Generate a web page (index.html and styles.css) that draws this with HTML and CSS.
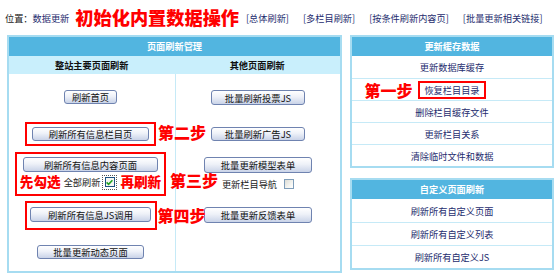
FILE: index.html
```html
<!DOCTYPE html>
<html lang="zh-CN">
<head>
  <meta charset="UTF-8">
  <title>初始化内置数据操作</title>
  <link rel="stylesheet" href="styles.css">
</head>
<body>

  <div class="topbar">
    <span class="loc">位置：<a href="#">数据更新</a></span>
    <span class="big-title">初始化内置数据操作</span>
    <a class="toplink first" href="#">[总体刷新]</a>
    <a class="toplink" href="#">[多栏目刷新]</a>
    <a class="toplink" href="#">[按条件刷新内容页]</a>
    <a class="toplink" href="#">[批量更新相关链接]</a>
  </div>

  <div class="main">
    <!-- left: page refresh -->
    <div class="panel left-panel">
      <div class="panel-head">页面刷新管理</div>
      <div class="sub-head">
        <div class="sub-cell">整站主要页面刷新</div>
        <div class="sub-cell">其他页面刷新</div>
      </div>
      <div class="cols">
        <div class="col col-a">
          <button class="btn b-home">刷新首页</button>

          <div class="mark mark1">
            <button class="btn b-list">刷新所有信息栏目页</button>
            <span class="step step2">第二步</span>
          </div>

          <div class="mark mark2">
            <button class="btn b-content">刷新所有信息内容页面</button>
            <div class="check-row">
              <span class="note">先勾选</span>
              <span class="check-label">全部刷新</span>
              <span class="focus"><span class="cbox checked"><svg width="7" height="7" viewBox="0 0 7 7"><path d="M0.6 3.4 L2.6 5.4 L6.4 1.2" stroke="#21a321" stroke-width="1.6" fill="none"/></svg></span></span>
              <span class="note">再刷新</span>
            </div>
            <span class="step step3">第三步</span>
          </div>

          <div class="mark mark3">
            <button class="btn b-js">刷新所有信息JS调用</button>
            <span class="step step4">第四步</span>
          </div>

          <button class="btn b-dyn">批量更新动态页面</button>
        </div>

        <div class="col col-b">
          <button class="btn b-vote">批量刷新投票JS</button>
          <button class="btn b-ad">批量刷新广告JS</button>
          <button class="btn b-model">批量更新模型表单</button>
          <div class="nav-row">
            <span>更新栏目导航</span>
            <span class="cbox"></span>
          </div>
          <button class="btn b-feed">批量更新反馈表单</button>
        </div>
      </div>
    </div>

    <!-- right: cache + custom pages -->
    <div class="side">
      <div class="panel box box1">
        <div class="panel-head">更新缓存数据</div>
        <div class="row"><a href="#">更新数据库缓存</a></div>
        <div class="row">
          <span class="mark-link">
            <a href="#">恢复栏目目录</a>
            <span class="step step1">第一步</span>
          </span>
        </div>
        <div class="row"><a href="#">删除栏目缓存文件</a></div>
        <div class="row"><a href="#">更新栏目关系</a></div>
        <div class="row"><a href="#">清除临时文件和数据</a></div>
      </div>

      <div class="panel box box2">
        <div class="panel-head">自定义页面刷新</div>
        <div class="row"><a href="#">刷新所有自定义页面</a></div>
        <div class="row"><a href="#">刷新所有自定义列表</a></div>
        <div class="row"><a href="#">刷新所有自定义JS</a></div>
      </div>
    </div>
  </div>

</body>
</html>
```

FILE: styles.css
```css
* {
  box-sizing: border-box;
}

body {
  margin: 0;
  background: #fff;
  color: #222;
  font-family: "Noto Sans CJK SC", "Noto Sans", sans-serif;
  font-size: 9.2px;
}

a {
  color: #1e2c6e;
  text-decoration: none;
}

/* top bar */
.topbar {
  height: 35px;
  display: flex;
  align-items: center;
  padding-left: 5px;
  white-space: nowrap;
}

.big-title {
  margin-left: 6px;
  font-size: 18.2px;
  font-weight: 900;
  line-height: 1;
  color: #f00;
}

.toplink {
  margin-left: 14px;
}
.toplink.first {
  margin-left: 7px;
}

/* layout */
.main {
  display: flex;
  padding-left: 7px;
  gap: 8px;
}

.panel {
  border: 2px solid #a6dcf1;
  background: #fff;
}

.panel-head {
  height: 19px;
  line-height: 19px;
  background: #52b5e0;
  color: #fff;
  text-align: center;
  font-weight: bold;
}

/* left panel */
.left-panel {
  width: 335px;
  height: 238px;
  display: flex;
  flex-direction: column;
}

.sub-head {
  height: 18px;
  flex-shrink: 0;
  display: flex;
  background: #c9effc;
  font-weight: bold;
  color: #111;
}
.sub-cell {
  flex: 1;
  line-height: 18px;
  text-align: center;
}

.cols {
  flex: 1;
  display: flex;
}

.col {
  display: flex;
  flex-direction: column;
  align-items: center;
}
.col-a {
  width: 167px;
  padding-right: 3px;
  border-right: 1px solid #c6eaf7;
}
.col-b {
  flex: 1;
}

.btn {
  height: 14px;
  flex-shrink: 0;
  padding: 0;
  border: 1px solid #6f83b0;
  border-radius: 3px;
  background: linear-gradient(to bottom, #ffffff 0%, #eef1f8 45%, #c9d3e8 100%);
  font-family: inherit;
  font-size: 9.3px;
  line-height: 12px;
  color: #111;
  white-space: nowrap;
}

.b-home    { width: 53px;  margin-top: 16px; }
.b-list    { width: 117px; }
.b-content { width: 135px; height: 15px; }
.b-js      { width: 121px; height: 15px; }
.b-dyn     { width: 107px; margin-top: 15px; }

.b-vote  { width: 94px;  height: 15px; margin-top: 16px; }
.b-ad    { width: 94px;  margin-top: 22px; }
.b-model { width: 108px; height: 16px; margin-top: 16px; }
.b-feed  { width: 108px; height: 16px; margin-top: 16px; }

/* red annotation boxes */
.mark {
  position: relative;
  flex-shrink: 0;
  border: 2px solid #f00;
  display: flex;
  flex-direction: column;
  align-items: center;
}
.mark1 {
  width: 131px;
  margin-top: 18px;
  padding: 3px;
}
.mark2 {
  width: 151px;
  margin-top: 6px;
  padding: 3px 0;
}
.mark3 {
  width: 132px;
  margin-top: 5px;
  padding: 4px 4px 6px;
}

.step {
  position: absolute;
  font-size: 16px;
  font-weight: 900;
  line-height: 1;
  color: #f00;
  white-space: nowrap;
}
.step2 { left: 131px; top: 0; }
.step3 { left: 153px; top: 18px; }
.step4 { left: 131px; top: 4px; }
.step1 { right: calc(100% + 8px); top: -1px; }

.check-row {
  height: 18px;
  margin-top: 1px;
  display: flex;
  align-items: center;
  white-space: nowrap;
}
.check-row > * {
  flex-shrink: 0;
}
.note {
  font-size: 13.6px;
  font-weight: 900;
  color: #f00;
  line-height: 1;
}
.check-label {
  margin: 0 2px 0 3px;
}
.focus {
  display: flex;
  align-items: center;
  justify-content: center;
  width: 15px;
  height: 15px;
  margin-right: 3px;
  border: 1px dotted #555;
}

.cbox {
  width: 10px;
  height: 10px;
  flex-shrink: 0;
  display: flex;
  align-items: center;
  justify-content: center;
  border: 1px solid #7f9db9;
  background: linear-gradient(135deg, #dcdcd6 0%, #f4f4f0 60%, #ffffff 100%);
}
.cbox.checked {
  border-color: #1c5180;
  background: #f6f6f2;
}

.nav-row {
  height: 15px;
  margin-top: 3px;
  display: flex;
  align-items: center;
  gap: 7px;
  white-space: nowrap;
}

/* right side */
.side {
  width: 204px;
  display: flex;
  flex-direction: column;
  gap: 10px;
}

.row {
  display: flex;
  align-items: center;
  justify-content: center;
  border-top: 1px solid #c6eaf7;
}
.box1 .row { height: 22px; }
.box2 .row { height: 23px; }
.box .panel-head + .row { border-top: none; }

.mark-link {
  position: relative;
  height: 18px;
  padding: 0 4px;
  display: flex;
  align-items: center;
  border: 2px solid #f00;
}
```
